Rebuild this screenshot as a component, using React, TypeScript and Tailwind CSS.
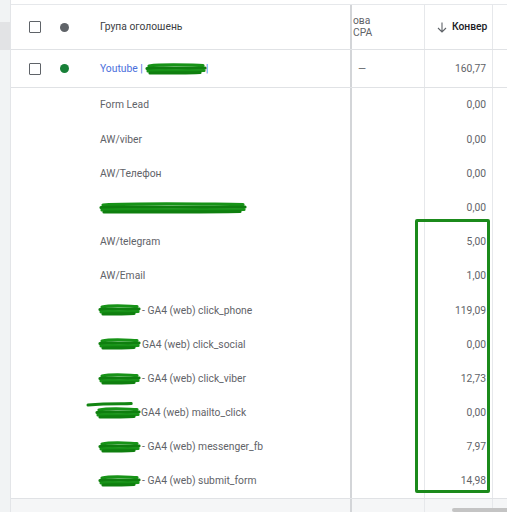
import React from 'react';

type Row = { pre?: 'full' | 'short' | 'mail'; label: string; value: string };

const rows: Row[] = [
  { label: 'Form Lead', value: '0,00' },
  { label: 'AW/viber', value: '0,00' },
  { label: 'AW/Телефон', value: '0,00' },
  { pre: 'full', label: '', value: '0,00' },
  { label: 'AW/telegram', value: '5,00' },
  { label: 'AW/Email', value: '1,00' },
  { pre: 'short', label: '- GA4 (web) click_phone', value: '119,09' },
  { pre: 'short', label: 'GA4 (web) click_social', value: '0,00' },
  { pre: 'short', label: '- GA4 (web) click_viber', value: '12,73' },
  { pre: 'mail', label: 'GA4 (web) mailto_click', value: '0,00' },
  { pre: 'short', label: '- GA4 (web) messenger_fb', value: '7,97' },
  { pre: 'short', label: '- GA4 (web) submit_form', value: '14,98' },
];

// marker scribble used to hide names in the screenshot
function Scribble({ width, variant = 0 }: { width: number; variant?: number }) {
  const w = width;
  const paths = [
    `M3 4 C ${w * 0.3} 2, ${w * 0.6} 3, ${w - 3} 3.5`,
    `M1 6.5 C ${w * 0.3} 5.5, ${w * 0.7} 7, ${w - 1} 6`,
    `M2 9 C ${w * 0.4} 8, ${w * 0.6} 9.5, ${w - 2} 8.5`,
    `M4 11 C ${w * 0.4} 10.5, ${w * 0.6} 11.5, ${w - 6} 10.5`,
  ];
  return (
    <svg
      width={w + 8}
      height={16}
      viewBox={`-4 -1 ${w + 8} 16`}
      className="absolute -left-[4px] top-1/2 -translate-y-1/2 overflow-visible"
    >
      {variant === 1 && (
        <path d={`M-8 -1 C ${w * 0.3} -3, ${w * 0.6} -2, ${w * 0.8} -2.5`} stroke="#128512" strokeWidth="3" fill="none" strokeLinecap="round" />
      )}
      {paths.map((d, i) => (
        <path key={i} d={d} stroke={i % 2 ? '#0f7f0f' : '#179317'} strokeWidth="3.2" fill="none" strokeLinecap="round" />
      ))}
    </svg>
  );
}

function Cells({ children, value, dash, h }: { children: React.ReactNode; value: string; dash?: boolean; h: string }) {
  return (
    <div className={`flex ${h}`}>
      <div className="w-[341px] shrink-0 border-r-2 border-[#d3d5d8] flex items-center">{children}</div>
      <div className="w-[73px] shrink-0 border-r border-[#e6e8eb] flex items-center pl-[6px] text-[#5f6368]">
        {dash ? '—' : ''}
      </div>
      <div className="w-[68px] shrink-0 border-r border-[#e6e8eb] flex items-center justify-end pr-[6px] text-[#5f6368]">
        {value}
      </div>
      <div className="flex-1" />
    </div>
  );
}

export default function App() {
  return (
    <div
      className="w-[507px] h-[512px] overflow-hidden bg-white flex text-[10.3px] relative"
      style={{ fontFamily: 'Roboto, "Noto Sans", sans-serif' }}
    >
      <div className="w-[11px] shrink-0 bg-[#f1f3f4] border-r border-[#e3e5e8]">
        <div className="h-[22px]" />
        <div className="h-[28px] bg-[#e2e3e5]" />
      </div>

      <div className="flex-1">
        <div className="h-[4px]" />
        <div className="border-t border-[#e6e8eb]">
          {/* header */}
          <div className="flex h-[45px] border-b border-[#e0e2e5]">
            <div className="w-[341px] shrink-0 border-r-2 border-[#d3d5d8] flex items-center">
              <span className="ml-[18px] w-[12px] h-[12px] border-[1.5px] border-[#5f6368] rounded-[1px]" />
              <span className="ml-[19px] w-[9px] h-[9px] rounded-full bg-[#5f6368]" />
              <span className="ml-[31px] text-[#3c4043]">Група оголошень</span>
            </div>
            <div className="w-[73px] shrink-0 border-r border-[#e6e8eb] flex flex-col justify-center leading-[12px] text-[#5f6368] pl-[1px]">
              <span>ова</span>
              <span>CPA</span>
            </div>
            <div className="w-[68px] shrink-0 border-r border-[#e6e8eb] flex items-center pl-[12px] whitespace-nowrap">
              <svg width="10" height="11" viewBox="0 0 10 11" className="shrink-0 mr-[5px]">
                <path d="M5 0.5 V10 M1 6 L5 10 L9 6" stroke="#5f6368" strokeWidth="1.1" fill="none" />
              </svg>
              <span className="font-medium text-[#202124]">Конвер</span>
            </div>
            <div className="flex-1" />
          </div>

          {/* campaign row */}
          <div className="border-b border-[#e0e2e5]">
            <Cells value="160,77" dash h="h-[37px]">
              <span className="ml-[18px] w-[12px] h-[12px] border-[1.5px] border-[#5f6368] rounded-[1px]" />
              <span className="ml-[19px] w-[9px] h-[9px] rounded-full bg-[#188038]" />
              <span className="ml-[31px] text-[#4a6fdc] flex items-center">
                Youtube |
                <span className="relative inline-block w-[60px] h-[12px] ml-[3px]">
                  <Scribble width={60} />
                </span>
                |
              </span>
            </Cells>
          </div>

          {/* ad groups */}
          <div className="border-b border-[#e0e2e5]">
            {rows.map((r, i) => (
              <Cells key={i} value={r.value} h="h-[34.2px]">
                <span className="ml-[89px] text-[#5f6368] flex items-center whitespace-nowrap">
                  {r.pre === 'full' && (
                    <span className="relative inline-block w-[146px] h-[12px]">
                      <Scribble width={146} />
                    </span>
                  )}
                  {r.pre === 'short' && (
                    <span className="relative inline-block w-[41px] h-[12px] -ml-[1px] mr-[2px]">
                      <Scribble width={41} />
                    </span>
                  )}
                  {r.pre === 'mail' && (
                    <span className="relative inline-block w-[44px] h-[12px] -ml-[4px] mr-[1px]">
                      <Scribble width={44} variant={1} />
                    </span>
                  )}
                  {r.label}
                </span>
              </Cells>
            ))}
          </div>

          {/* footer band */}
          <div className="flex h-[20px] bg-[#f5f6f7]">
            <div className="w-[341px] shrink-0 border-r-2 border-[#d3d5d8]" />
            <div className="w-[73px] shrink-0 border-r border-[#e6e8eb]" />
            <div className="w-[68px] shrink-0 border-r border-[#e6e8eb]" />
          </div>
        </div>
      </div>

      {/* highlight annotation */}
      <div className="absolute left-[415px] top-[219px] w-[75px] h-[274px] border-[3px] border-[#1b8a1b] rounded-[2px]" />
      {/* scrollbar */}
      <div className="absolute left-[452px] top-[508px] w-[55px] h-[4px] bg-[#c4c4c4] rounded-l-[2px]" />
    </div>
  );
}
